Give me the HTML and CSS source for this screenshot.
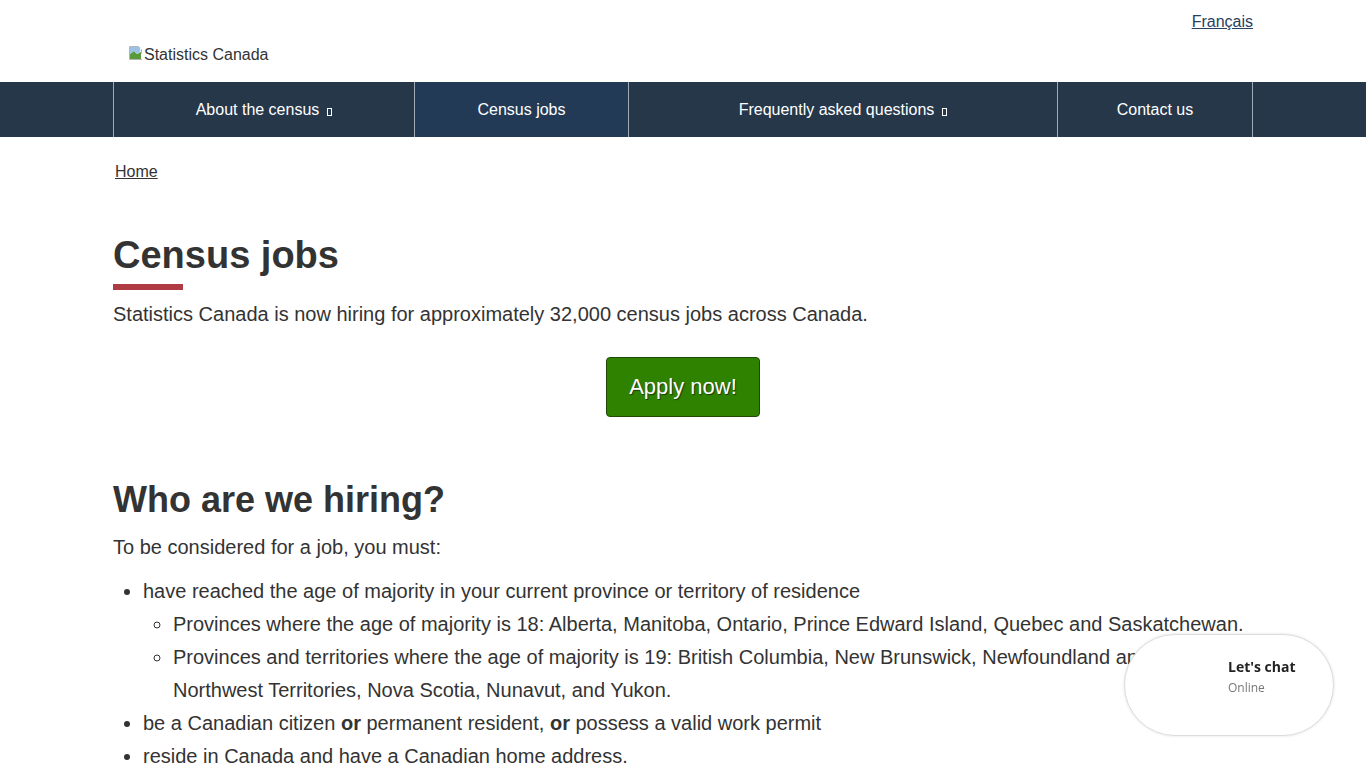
FILE: index.html
```html
<!DOCTYPE html>
<html lang="en">
<head>
<meta charset="utf-8">
<title>Census jobs</title>
<link rel="stylesheet" href="styles.css">
</head>
<body>
<header class="site-header">
  <div class="container header-inner">
    <div class="lang-row"><a href="#" class="lang-link" lang="fr">Français</a></div>
    <div class="brand">
      <svg class="broken-img" width="16" height="16" viewBox="0 0 16 16" aria-hidden="true">
        <path d="M1.5 1.5h9l3 3v4" fill="#fff" stroke="#b5b5b5"/>
        <path d="M1.5 1.5v13h12.5" fill="none" stroke="#b5b5b5"/>
        <rect x="2" y="2" width="11" height="12" fill="#eef3f8"/>
        <path d="M2 9 L6 6 L9 9 L13 7 V14 H2Z" fill="#5a9a3a"/>
        <path d="M2 2 H12 V7 L9 9 L6 6 L2 9Z" fill="#9cc3e6"/>
      </svg><span class="brand-alt">Statistics Canada</span>
    </div>
  </div>
  <nav class="main-nav">
    <div class="container nav-inner">
      <a href="#" class="nav-item w1">About the census <span class="caret"></span></a>
      <a href="#" class="nav-item w2 active">Census jobs</a>
      <a href="#" class="nav-item w3">Frequently asked questions <span class="caret"></span></a>
      <a href="#" class="nav-item w4">Contact us</a>
    </div>
  </nav>
</header>

<main class="container content">
  <div class="breadcrumb"><a href="#">Home</a></div>
  <h1 class="page-title">Census jobs</h1>
  <p class="lead">Statistics Canada is now hiring for approximately 32,000 census jobs across Canada.</p>
  <div class="cta"><a href="#" class="btn-apply">Apply now!</a></div>

  <h2 class="section-title">Who are we hiring?</h2>
  <p>To be considered for a job, you must:</p>
  <ul class="reqs">
    <li>have reached the age of majority in your current province or territory of residence
      <ul>
        <li>Provinces where the age of majority is 18: Alberta, Manitoba, Ontario, Prince Edward Island, Quebec and Saskatchewan.</li>
        <li>Provinces and territories where the age of majority is 19: British Columbia, New Brunswick, Newfoundland and Labrador, Northwest Territories, Nova Scotia, Nunavut, and Yukon.</li>
      </ul>
    </li>
    <li>be a Canadian citizen <strong>or</strong> permanent resident, <strong>or</strong> possess a valid work permit</li>
    <li>reside in Canada and have a Canadian home address.</li>
  </ul>
</main>

<div class="chat-widget">
  <div class="chat-avatar"></div>
  <div class="chat-text">
    <div class="chat-title">Let's chat</div>
    <div class="chat-status">Online</div>
  </div>
</div>
</body>
</html>
```

FILE: styles.css
```css
* { box-sizing: border-box; }
html, body { margin: 0; padding: 0; }
body {
  font-family: "Liberation Sans", Arial, Helvetica, sans-serif;
  color: #333;
  background: #fff;
  font-size: 20px;
  line-height: 1.65;
}
a { color: #284162; }

.container {
  width: 1140px;
  margin: 0 auto;
}

/* header */
.site-header { background: #fff; }
.header-inner { height: 82px; position: relative; }
.lang-row {
  display: flex;
  justify-content: flex-end;
  padding-top: 11px;
  height: 44px;
  font-size: 16px;
  line-height: 22px;
}
.lang-link { color: #284162; }
.brand {
  display: flex;
  align-items: center;
  padding-left: 15px;
  height: 22px;
  font-size: 16px;
  line-height: 20px;
}
.broken-img { display: block; margin-top: -4px; }
.brand-alt { color: #333; }

/* nav */
.main-nav { background: #26374a; height: 55px; }
.nav-inner {
  display: flex;
  height: 55px;
  border-left: 1px solid #9ea9b5;
}
.nav-item {
  display: flex;
  align-items: center;
  justify-content: center;
  color: #fff;
  text-decoration: none;
  font-size: 16px;
  line-height: 20px;
  border-right: 1px solid #9ea9b5;
  height: 55px;
}
.nav-item.active { background: #233a57; }
.w1 { width: 301px; }
.w2 { width: 214px; }
.w3 { width: 429px; }
.w4 { width: 195px; }
.caret {
  display: inline-block;
  width: 5px;
  height: 8px;
  border: 1px solid #fff;
  margin-left: 8px;
  margin-top: 4px;
}

/* content */
.content { padding-bottom: 40px; }
.breadcrumb {
  font-size: 16px;
  line-height: 22px;
  padding: 24px 0 0 2px;
}
.breadcrumb a { color: #333; }
.page-title {
  font-size: 38px;
  line-height: 46px;
  font-weight: 700;
  margin: 49px 0 0;
  padding-bottom: 8px;
  position: relative;
  color: #333;
}
.page-title::after {
  content: "";
  display: block;
  width: 70px;
  height: 6px;
  background: #af3c43;
  margin-top: 6px;
}
p { margin: 0 0 11px; }
.lead { margin-top: 0; }
.cta {
  display: flex;
  justify-content: center;
  margin-top: 26px;
}
.btn-apply {
  display: inline-flex;
  align-items: center;
  justify-content: center;
  width: 154px;
  height: 60px;
  background: #2f8200;
  border: 1px solid #1e4b0a;
  border-radius: 4px;
  color: #fff;
  text-decoration: none;
  font-size: 22px;
  text-shadow: 1px 1px 1px #1b3a0a;
}
.section-title {
  font-size: 36px;
  line-height: 44px;
  font-weight: 700;
  margin: 61px 0 9px;
  color: #333;
}
.reqs {
  margin: 0;
  padding-left: 30px;
}
.reqs ul {
  list-style: circle;
  padding-left: 30px;
  margin: 0;
}
.reqs li { margin: 0; }

/* chat widget */
.chat-widget {
  position: fixed;
  left: 1124px;
  top: 634px;
  width: 210px;
  height: 102px;
  border-radius: 51px;
  background: #fff;
  border: 1px solid #dcdcdc;
  box-shadow: 0 0 3px rgba(0,0,0,0.12);
  display: flex;
  align-items: flex-start;
  padding: 23px 0 0 103px;
  font-family: "Open Sans", "Noto Sans", sans-serif;
}
.chat-title {
  font-size: 14px;
  font-weight: 700;
  line-height: 18px;
  color: #222;
}
.chat-status {
  font-size: 12px;
  color: #777;
  line-height: 16px;
  margin-top: 4px;
}
```
